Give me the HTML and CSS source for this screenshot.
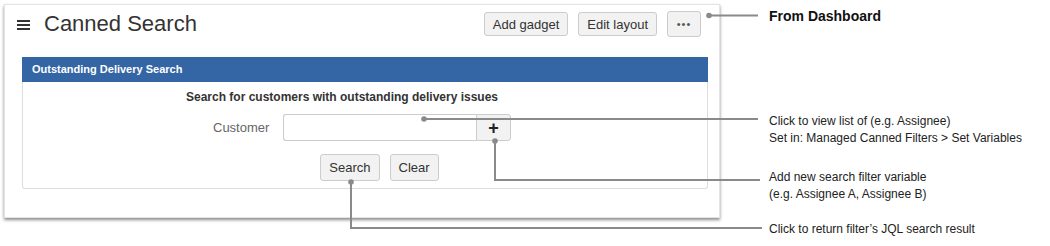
FILE: index.html
```html
<!DOCTYPE html>
<html>
<head>
<title>Canned Search</title>
<link rel="stylesheet" href="styles.css">
</head>
<body>

<div class="page">
  <div class="shot">
    <div class="topbar">
      <svg class="burger" width="13" height="10" viewBox="0 0 13 10">
        <rect x="0" y="0" width="13" height="2" fill="#333"/>
        <rect x="0" y="4" width="13" height="2" fill="#333"/>
        <rect x="0" y="8" width="13" height="2" fill="#333"/>
      </svg>
      <h1 class="title">Canned Search</h1>
      <div class="actions">
        <button class="btn">Add gadget</button>
        <button class="btn">Edit layout</button>
        <button class="btn more">&bull;&bull;&bull;</button>
      </div>
    </div>

    <div class="gadget">
      <div class="gadget-head">Outstanding Delivery Search</div>
      <div class="gadget-body">
        <div class="intro">Search for customers with outstanding delivery issues</div>
        <form class="search-form">
          <label class="field-label">Customer</label>
          <input type="text" class="field-input">
          <button type="button" class="btn add">+</button>
          <div class="form-buttons">
            <button type="button" class="btn">Search</button>
            <button type="button" class="btn">Clear</button>
          </div>
        </form>
      </div>
    </div>
  </div>

  <div class="notes">
    <div class="note note-title">From Dashboard</div>
    <div class="note note-list">Click to view list of (e.g. Assignee)<br>Set in: Managed Canned Filters &gt; Set Variables</div>
    <div class="note note-add">Add new search filter variable<br>(e.g. Assignee A, Assignee B)</div>
    <div class="note note-search">Click to return filter’s JQL search result</div>
  </div>

  <!-- callout lines drawn over the screenshot -->
  <svg class="callouts" width="1050" height="246" viewBox="0 0 1050 246">
    <g fill="none" stroke="#8a8a8a" stroke-width="2">
      <path d="M709 15.5 H758"/>
      <path d="M424 119 H758"/>
      <path d="M495 141 V180 H760"/>
      <path d="M351 182 V228 H762"/>
    </g>
    <g fill="#8a8a8a">
      <circle cx="709" cy="15.5" r="2.8"/>
      <circle cx="424" cy="119" r="2.8"/>
      <circle cx="495" cy="141" r="2.8"/>
      <circle cx="351" cy="182" r="2.8"/>
    </g>
  </svg>
</div>

</body>
</html>
```

FILE: styles.css
```css
body {
  margin:0;
  font-family:"Liberation Sans", Arial, sans-serif;
  color:#333;
  background:#fff;
}
.page {
  position:relative;
  display:flex;
  width:1050px;
  height:246px;
}
.shot {
  margin:4px 0 0 4px;
  width:716px;
  height:214px;
  box-sizing:border-box;
  border:1px solid #e4e4e4;
  background:#fff;
  box-shadow:0 2px 3px rgba(0,0,0,0.45);
}
.topbar {
  display:flex;
  align-items:center;
  height:26px;
  padding:6px 18px 6px 12px;
}
.burger {
  display:block;
  margin-top:1px;
}
.title {
  margin:0 0 0 14px;
  font-size:22px;
  font-weight:normal;
  color:#333;
}
.actions {
  margin-left:auto;
  display:flex;
  align-items:center;
  gap:10px;
}
.btn {
  height:24px;
  padding:0 8px;
  border:1px solid #ccc;
  border-radius:3px;
  background:#f2f2f2;
  font-family:"Liberation Sans", Arial, sans-serif;
  font-size:13px;
  color:#333;
}
.more {
  height:26px;
  width:34px;
  padding:0;
  font-size:11px;
  letter-spacing:1px;
  color:#555;
}
.gadget {
  margin:14px 11px 0 17px;
}
.gadget-head {
  height:25px;
  line-height:25px;
  padding-left:10px;
  background:#3466a6;
  color:#fff;
  font-size:11px;
  font-weight:bold;
}
.gadget-body {
  border:1px solid #ddd;
  border-top:none;
  border-radius:0 0 3px 3px;
  padding:7px 0 7px;
}
.intro {
  padding-right:46px;
  text-align:center;
  font-size:12px;
  font-weight:bold;
  line-height:16px;
  color:#333;
}
.search-form {
  display:grid;
  grid-template-columns:70px 193px 35px;
  justify-content:center;
  padding-right:6px;
  margin-top:9px;
}
.field-label {
  align-self:center;
  padding-right:15px;
  text-align:right;
  font-size:13px;
  color:#666;
}
.field-input {
  height:27px;
  box-sizing:border-box;
  margin:0;
  border:1px solid #ccc;
  border-right:none;
  border-radius:3px 0 0 3px;
  background:#fff;
}
.add {
  height:27px;
  margin:0;
  padding:0;
  border-radius:0 3px 3px 0;
  font-size:18px;
  font-weight:bold;
  line-height:22px;
  color:#222;
}
.form-buttons {
  grid-column:2 / 3;
  display:flex;
  justify-content:center;
  gap:10px;
  margin-top:13px;
}
.form-buttons .btn {
  height:27px;
  padding:0 8px;
}
.notes {
  margin-left:49px;
  display:flex;
  flex-direction:column;
  font-size:12px;
  color:#222;
}
.note {
  line-height:17px;
}
.note-title {
  margin-top:7px;
  font-size:14px;
  font-weight:bold;
  line-height:18px;
  color:#111;
}
.note-list {
  margin-top:88px;
}
.note-add {
  margin-top:22px;
}
.note-search {
  margin-top:18px;
}
.callouts {
  position:absolute;
  left:0;
  top:0;
}
```
